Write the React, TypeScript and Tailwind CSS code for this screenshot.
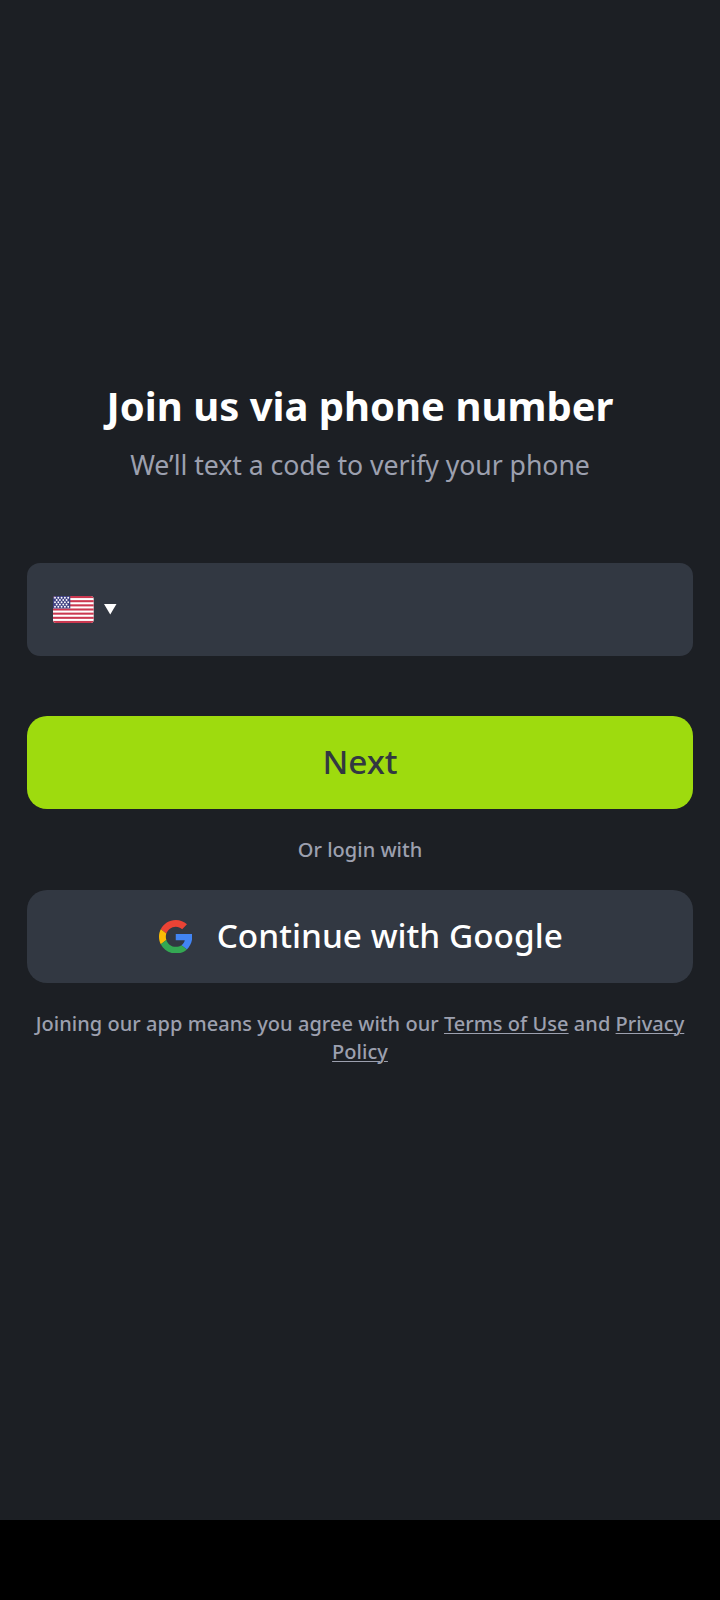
const stars = Array.from({ length: 5 }, (_, r) =>
  Array.from({ length: r % 2 ? 4 : 5 }, (_, c) => [2 + c * 3.3 + (r % 2 ? 1.65 : 0), 1.8 + r * 2.25]),
).flat();

export default function App() {
  return (
    <div className="flex h-[1600px] w-[720px] flex-col bg-black font-['Noto_Sans',sans-serif]">
      <main className="flex h-[1520px] flex-col items-center bg-[#1c1f24] px-[27px] pt-[378px] text-center">
        <h1 className="text-[40px] leading-[56px] font-bold text-white">Join us via phone number</h1>
        <p className="mt-[13px] text-[26.67px] leading-[36px] tracking-[-0.055px] text-[#9ca0af]">We’ll text a code to verify your phone</p>
        <div className="mt-[80px] flex h-[93px] w-full items-center rounded-[13px] bg-[#323842] pl-[26px]">
          <svg width="41" height="27" viewBox="0 0 41 27">
            <defs><clipPath id="flag"><rect width="40.7" height="27" rx="3" /></clipPath></defs>
            <g clipPath="url(#flag)">
              <rect width="41" height="27" fill="#fff" />
              {[0, 1, 2, 3, 4, 5, 6].map((i) => <rect key={i} y={i * 4.154} width="41" height="2.077" fill="#cb3850" />)}
              <rect width="17.3" height="12.46" fill="#3f4182" />
              {stars.map(([x, y], i) => <circle key={i} cx={x} cy={y} r=".95" fill="#fff" />)}
            </g>
          </svg>
          <svg className="ml-[10px]" width="12.5" height="10.5" viewBox="0 0 12.5 10.5"><path d="M0 0H12.5L6.25 10.5Z" fill="#fff" /></svg>
        </div>
        <button className="mt-[60px] flex h-[93px] w-full items-center justify-center rounded-[20px] bg-[#9edb0e] pb-[2px] text-[33.33px] font-medium text-[#323841]">Next</button>
        <p className="mt-[27px] text-[20px] leading-[27px] font-medium tracking-[0.02px] text-[#9ca0af]">Or login with</p>
        <button className="mt-[27px] flex h-[93px] w-full items-center justify-center gap-[24.5px] rounded-[20px] bg-[#323842] pb-[2px] pl-[1.5px] text-[33.33px] font-medium tracking-[0.02px] text-white">
          <svg className="mt-[2px]" width="33.5" height="33.5" viewBox="0 0 48 48">
            <path fill="#EA4335" d="M24 9.5c3.54 0 6.71 1.22 9.21 3.6l6.85-6.85C35.9 2.38 30.47 0 24 0 14.62 0 6.51 5.38 2.56 13.22l7.98 6.19C12.43 13.72 17.74 9.5 24 9.5z" />
            <path fill="#4285F4" d="M47.6 20H24v9.02h12.94c-.58 2.96-2.26 5.48-4.78 7.18l7.73 6c4.51-4.18 7.71-10.36 7.71-17.65z" />
            <path fill="#FBBC05" d="M10.53 28.59c-.48-1.45-.76-2.99-.76-4.59s.27-3.14.76-4.59l-7.98-6.19C.92 16.46 0 20.12 0 24c0 3.88.92 7.54 2.56 10.78l7.97-6.19z" />
            <path fill="#34A853" d="M24 48c6.48 0 11.93-2.13 15.89-5.81l-7.73-6c-2.15 1.45-4.92 2.3-8.16 2.3-6.26 0-11.57-4.22-13.47-9.91l-7.98 6.19C6.51 42.62 14.62 48 24 48z" />
          </svg>
          Continue with Google
        </button>
        <p className="-mx-[10px] mt-[27px] text-[20px] leading-[27.5px] font-medium tracking-[0.04px] text-[#9ca0af]">
          <span className="block">Joining our app means you agree with our <a className="underline decoration-1 underline-offset-2">Terms of Use</a> and <a className="underline decoration-1 underline-offset-2">Privacy</a></span>
          <a className="block underline decoration-1 underline-offset-2">Policy</a>
        </p>
      </main>
    </div>
  );
}
